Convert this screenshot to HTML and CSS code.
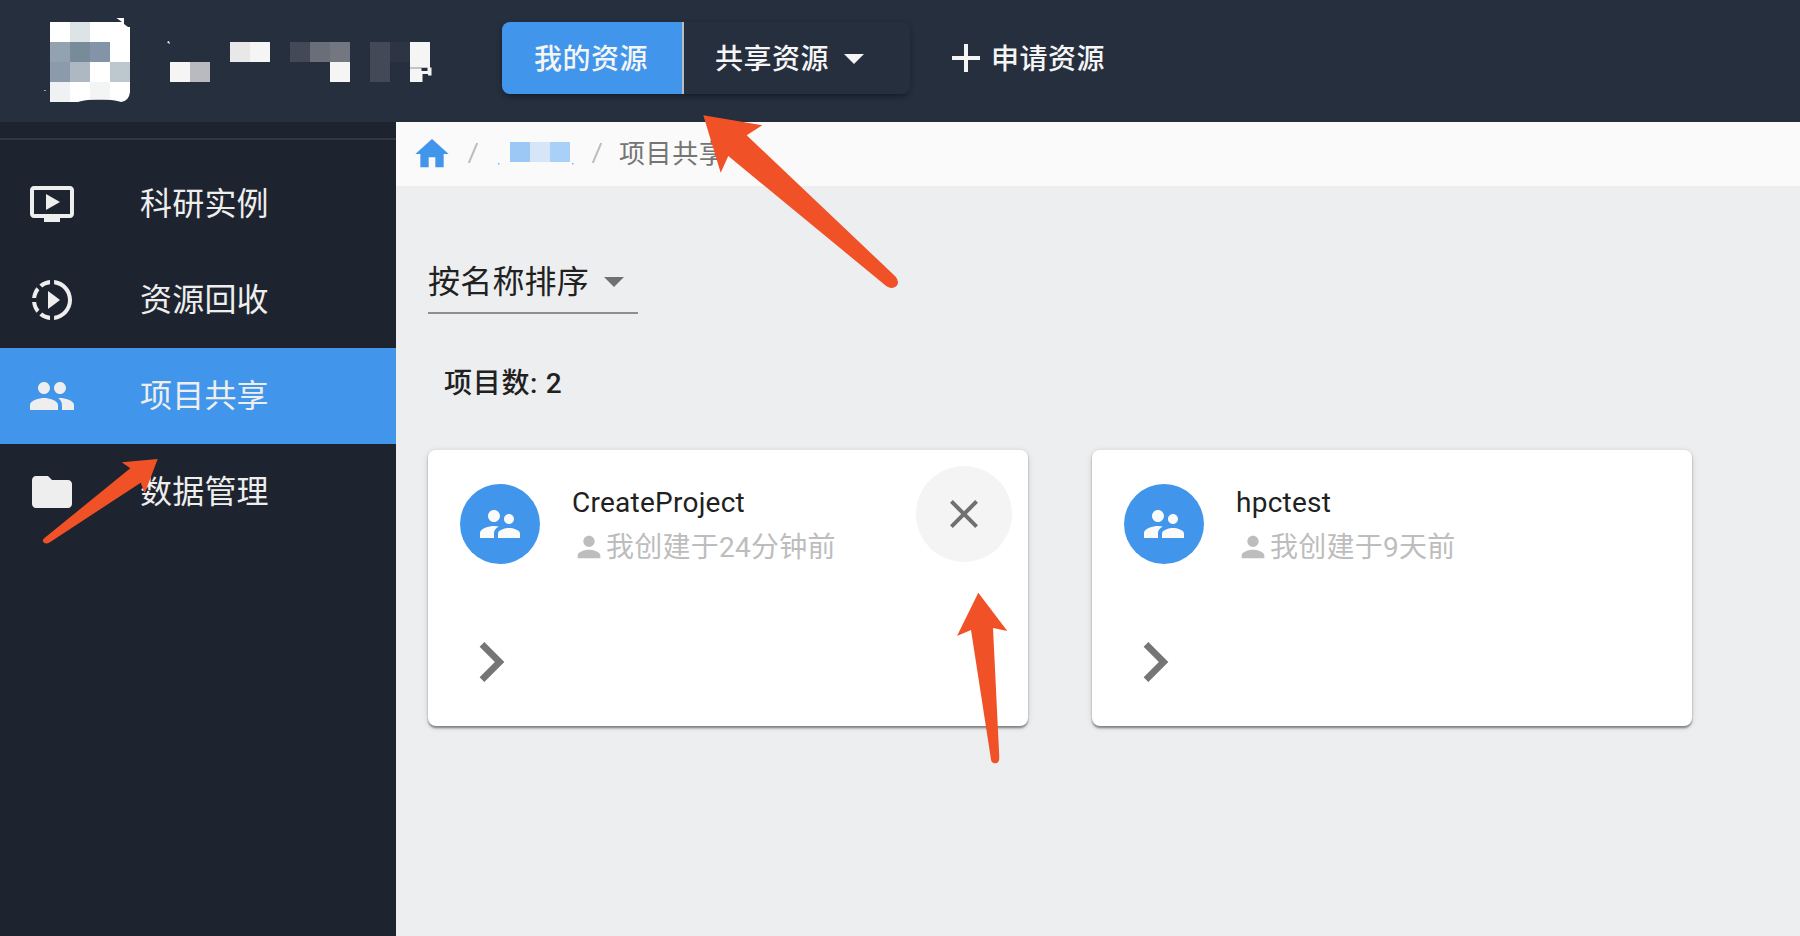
FILE: index.html
```html
<!DOCTYPE html>
<html lang="zh-CN">
<head>
<meta charset="utf-8">
<title>项目共享</title>
<link rel="stylesheet" href="styles.css">
</head>
<body>
<svg class="defs" width="0" height="0">
  <symbol id="i-group" viewBox="0 0 24 24"><path d="M16.5 12c1.38 0 2.49-1.12 2.49-2.5S17.88 7 16.5 7C15.12 7 14 8.12 14 9.5s1.12 2.5 2.5 2.5zM9 11c1.66 0 2.99-1.34 2.99-3S10.66 5 9 5C7.34 5 6 6.34 6 8s1.34 3 3 3zm7.5 3c-1.83 0-5.5.92-5.5 2.75V19h11v-2.25c0-1.83-3.67-2.75-5.5-2.75zM9 13c-2.33 0-7 1.17-7 3.5V19h7v-2.25c0-.85.33-2.34 2.37-3.47C10.5 13.1 9.66 13 9 13z"/></symbol>
  <symbol id="i-person" viewBox="0 0 24 24"><path d="M12 12c2.21 0 4-1.79 4-4s-1.79-4-4-4-4 1.79-4 4 1.79 4 4 4zm0 2c-2.67 0-8 1.34-8 4v2h16v-2c0-2.66-5.33-4-8-4z"/></symbol>
  <symbol id="i-chevron" viewBox="0 0 24 24"><path d="M10 6L8.59 7.41 13.17 12l-4.58 4.59L10 18l6-6z"/></symbol>
  <symbol id="i-caret" viewBox="0 0 24 24"><path d="M7 10l5 5 5-5z"/></symbol>
</svg>
<header class="topbar">
  <svg class="brand" viewBox="0 0 440 122">
    <path fill="#fff" d="M116.500 18H124V24L128 27H130V92Q129 101 121 102Q113 99 100 99.500Q86 99 78 102H50V22H122Z"/>
    <path fill="#dce4e6" d="M70 22h20v20H70z"/>
    <path fill="#93a2af" d="M50 42h20v20H50z"/><path fill="#778b98" d="M70 42h20v20H70z"/><path fill="#8494a8" d="M90 42h20v20H90z"/>
    <path fill="#8b9bac" d="M50 62h20v20H50z"/><path fill="#adb8c2" d="M70 62h20v20H70z"/><path fill="#bcc7ce" d="M110 62h20v20h-20z"/>
    <path fill="#f0f1f3" d="M50 82h20v20H50z"/><path fill="#f3f5f4" d="M90 82h20v17.500H90z"/>
    <path fill="#9ba0a8" d="M44 90h2v1h-2z"/><path fill="#f5f5f5" d="M167 42l2-1 1 3-2-1z"/>
    <path fill="#f5f5f5" d="M170 62h20v20h-20z"/><path fill="#b8bac0" d="M190 62h20v20h-20z"/>
    <path fill="#e8e8e8" d="M230 42h20v20h-20z"/><path fill="#f5f5f5" d="M250 42h20v20h-20z"/>
    <path fill="#434956" d="M290 42h20v20h-20z"/><path fill="#696e78" d="M310 42h20v20h-20z"/><path fill="#727780" d="M330 42h20v20h-20z"/><path fill="#f5f5f5" d="M330 62h20v20h-20z"/>
    <path fill="#434956" d="M370 42h20v40h-20z"/><path fill="#2d3544" d="M390 42h20v20h-20z"/>
    <path fill="#f5f5f5" d="M410 42h20v25.500h1.500v8H428v-1.500h-5.500V82H410V68.300h11.500V71h6v-3.300H410z"/>
  </svg>
  <nav class="topnav">
    <div class="btn-group">
      <a class="tab tab-active"><span>我的资源</span></a>
      <a class="tab tab-menu"><span>共享资源</span><svg class="tab-caret"><use href="#i-caret"/></svg></a>
    </div>
    <a class="apply"><svg class="plus" viewBox="0 0 28 28"><path d="M12 0h4v12h12v4H16v12h-4V16H0v-4h12z"/></svg><span>申请资源</span></a>
  </nav>
</header>
<div class="body">
  <aside class="sidebar">
    <div class="divider"></div>
    <a class="item"><svg viewBox="0 0 24 24"><path d="M21 3H3c-1.110 0-2 .89-2 2v12c0 1.100.89 2 2 2h5v2h8v-2h5c1.100 0 1.990-.9 1.990-2L23 5c0-1.110-.9-2-2-2zm0 14H3V5h18v12zm-5-6l-7 4V7z"/></svg><span>科研实例</span></a>
    <a class="item"><svg viewBox="0 0 24 24"><path d="M13.050 9.790L10 7.500v9l3.050-2.290L16 12zM11 4.070V2.050c-2.010.2-3.840 1-5.320 2.210L7.100 5.690c1.110-.86 2.440-1.440 3.900-1.620zM5.690 7.100L4.260 5.680C3.050 7.160 2.250 8.990 2.050 11h2.020c.18-1.460.76-2.790 1.620-3.900zM4.070 13H2.050c.2 2.010 1 3.840 2.210 5.320l1.430-1.430c-.86-1.100-1.440-2.430-1.620-3.890zm1.610 6.740C7.160 20.950 9 21.750 11 21.950v-2.020c-1.460-.18-2.790-.76-3.900-1.620l-1.420 1.430zM22 12c0 5.160-3.920 9.420-8.950 9.950v-2.020C16.970 19.410 20 16.050 20 12s-3.030-7.410-6.950-7.930V2.050C18.080 2.580 22 6.840 22 12z"/></svg><span>资源回收</span></a>
    <a class="item item-active"><svg viewBox="0 0 24 24"><path d="M16 11c1.660 0 2.990-1.340 2.990-3S17.660 5 16 5c-1.660 0-3 1.340-3 3s1.340 3 3 3zm-8 0c1.660 0 2.990-1.340 2.990-3S9.660 5 8 5C6.340 5 5 6.340 5 8s1.340 3 3 3zm0 2c-2.330 0-7 1.170-7 3.500V19h14v-2.500c0-2.330-4.670-3.500-7-3.500zm8 0c-.29 0-.62.020-.97.050 1.160.84 1.970 1.970 1.970 3.450V19h6v-2.500c0-2.330-4.670-3.500-7-3.500z"/></svg><span>项目共享</span></a>
    <a class="item"><svg viewBox="0 0 24 24"><path d="M10 4H4c-1.100 0-1.990.9-1.990 2L2 18c0 1.100.9 2 2 2h16c1.100 0 2-.9 2-2V8c0-1.100-.9-2-2-2h-8l-2-2z"/></svg><span>数据管理</span></a>
  </aside>
  <main class="main">
    <nav class="crumbs">
      <svg class="home" viewBox="0 0 24 24"><path d="M10 20v-6h4v6h5v-8h3L12 3 2 12h3v8z"/></svg>
      <svg class="slash" viewBox="0 0 10 20"><path d="M9.200 0L.8 20"/></svg>
      <svg class="masked" viewBox="0 0 76 24"><path fill="#9cc8f5" d="M12 0h20v20H12z"/><path fill="#d6e6f8" d="M32 0h20v20H32z"/><path fill="#a9d0f6" d="M52 0h20v20H52z"/><path fill="#7fb8f2" d="M0 21h1.500v1.500H0zM74 21h1.500v1.500H74z"/></svg>
      <svg class="slash slash-last" viewBox="0 0 10 20"><path d="M9.200 0L.8 20"/></svg>
      <span>项目共享</span>
    </nav>
    <section class="content">
      <div class="select"><span>按名称排序</span><svg class="select-caret"><use href="#i-caret"/></svg></div>
      <h2 class="count">项目数: 2</h2>
      <div class="cards">
        <article class="card">
          <div class="card-head">
            <div class="avatar"><svg><use href="#i-group"/></svg></div>
            <div class="info">
              <div class="name">CreateProject</div>
              <div class="meta"><svg><use href="#i-person"/></svg><span>我创建于24分钟前</span></div>
            </div>
            <button class="close"><svg viewBox="0 0 24 24"><path d="M19 6.410L17.590 5 12 10.590 6.410 5 5 6.410 10.590 12 5 17.590 6.410 19 12 13.410 17.590 19 19 17.590 13.410 12z"/></svg></button>
          </div>
          <svg class="chevron"><use href="#i-chevron"/></svg>
        </article>
        <article class="card">
          <div class="card-head">
            <div class="avatar"><svg><use href="#i-group"/></svg></div>
            <div class="info">
              <div class="name">hpctest</div>
              <div class="meta"><svg><use href="#i-person"/></svg><span>我创建于9天前</span></div>
            </div>
          </div>
          <svg class="chevron"><use href="#i-chevron"/></svg>
        </article>
      </div>
    </section>
  </main>
</div>
<svg class="arrows" viewBox="0 0 1800 936">
  <path d="M703.300 115.300L762.300 125.300L746.700 135.300L895.500 276.500Q900 282 896.500 286Q892 290 886.500 286.300L728.300 156L720.700 172.700Z"/>
  <path d="M157.700 459L144.700 493.300L140.700 482.700L49.500 542.500Q45 545 43 541.500Q42.300 539.500 44.500 538L130.300 468.300L121.700 462.300Z"/>
  <path d="M978.300 592.700L1007.300 631L993 628L999.300 757.500Q999.500 763.300 995 763.300Q991.500 763.300 991 759.500L971 630L957 636Z"/>
</svg>
</body>
</html>
```
FILE: styles.css
```css
* { box-sizing: border-box; }
body {
  margin: 0;
  width: 1800px;
  height: 936px;
  overflow: hidden;
  position: relative;
  display: flex;
  flex-direction: column;
  font-family: Roboto, "Noto Sans CJK SC", sans-serif;
  color: #212121;
}
svg { display: block; flex: none; fill: currentColor; }
.defs { position: absolute; }

.topbar {
  height: 122px;
  flex: none;
  display: flex;
  background: #262f3e;
  color: #f5f5f5;
}
.brand { width: 440px; height: 122px; }
.topnav {
  display: flex;
  align-items: center;
  gap: 42px;
  height: 72px;
  margin: 22px 0 0 62px;
  font-size: 28px;
  font-weight: 500;
  letter-spacing: .5px;
}
.topnav span { margin-bottom: 2px; }
.btn-group {
  display: flex;
  width: 408px;
  height: 72px;
  border-radius: 8px;
  box-shadow: 0 4px 6px -2px rgba(0,0,0,.35), 0 1px 6px rgba(0,0,0,.12);
}
.tab { display: flex; align-items: center; }
.tab-active {
  width: 182px;
  padding-left: 32px;
  background: #4196ec;
  border-right: 2px solid #b9bcc0;
  border-radius: 8px 0 0 8px;
}
.tab-menu { padding-left: 31px; }
.tab-caret { width: 48px; height: 48px; margin-left: 1px; }
.apply { display: flex; align-items: center; gap: 11px; }
.plus { width: 28px; height: 28px; }

.body { flex: 1; display: flex; }
.sidebar {
  width: 396px;
  flex: none;
  padding-top: 16px;
  background: #1e242f;
  color: #eee;
}
.divider { height: 2px; background: #313743; margin-bottom: 16px; }
.item {
  display: flex;
  align-items: center;
  gap: 64px;
  height: 96px;
  padding-left: 28px;
  font-size: 32px;
  letter-spacing: .2px;
}
.item svg { width: 48px; height: 48px; }
.item span { margin-bottom: 6px; }
.item-active { background: #4196ec; }

.main { flex: 1; background: #edeef0; }
.crumbs {
  display: flex;
  align-items: center;
  height: 64px;
  padding-left: 16px;
  background: #fafafa;
  color: #757575;
  font-size: 26px;
  letter-spacing: .6px;
}
.crumbs span { margin: 0 0 6px -1px; }
.home { width: 40px; height: 40px; color: #4196ec; }
.slash {
  width: 10px;
  height: 20px;
  margin: 0 20px 2px 16px;
  fill: none;
  stroke: #bdbdbd;
  stroke-width: 2;
}
.slash-last { margin: 0 18px 2px; }
.masked { width: 76px; height: 24px; }

.content { padding: 64px 32px 0; }
.select {
  display: flex;
  align-items: center;
  width: 210px;
  height: 64px;
  border-bottom: 2px solid #8d8e8f;
  font-size: 32px;
  letter-spacing: .2px;
}
.select span { margin-bottom: 4px; }
.select-caret { width: 48px; height: 48px; margin-left: 1px; color: #6f7071; }
.count {
  margin: 50px 0 0 16px;
  font-size: 28px;
  line-height: 40px;
  font-weight: 500;
  letter-spacing: .7px;
}
.cards { display: flex; gap: 64px; margin-top: 46px; }
.card {
  width: 600px;
  height: 276px;
  border-radius: 8px;
  background: #fff;
  box-shadow: 0 2px 2px rgba(0,0,0,.28), 0 3px 3px -1px rgba(0,0,0,.2), 0 1px 6px rgba(0,0,0,.14);
}
.card-head { display: flex; height: 172px; padding: 16px 16px 0 32px; }
.avatar {
  display: grid;
  place-items: center;
  width: 80px;
  height: 80px;
  margin-top: 18px;
  border-radius: 50%;
  background: #4196ec;
  color: #fafafa;
}
.avatar svg { width: 48px; height: 48px; }
.info { flex: 1; padding: 16px 0 0 32px; font-size: 28px; letter-spacing: .25px; }
.name { height: 42px; line-height: 42px; }
.meta {
  display: flex;
  align-items: center;
  height: 46px;
  color: #bdbdbd;
}
.meta svg { width: 34px; height: 34px; }
.meta span { margin-bottom: 4px; }
.close {
  display: grid;
  place-items: center;
  width: 96px;
  height: 96px;
  padding: 0;
  border: 0;
  border-radius: 50%;
  background: #f4f4f4;
  color: #707070;
}
.close svg { width: 48px; height: 48px; }
.chevron { width: 80px; height: 80px; margin-left: 23px; color: #757575; }

.arrows {
  position: absolute;
  left: 0;
  top: 0;
  width: 1800px;
  height: 936px;
  color: #f05126;
  pointer-events: none;
}
```
